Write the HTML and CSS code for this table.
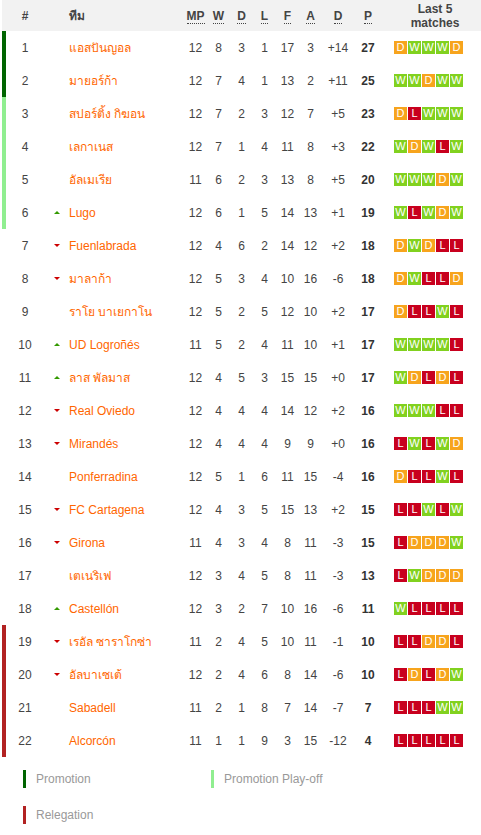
FILE: index.html
```html
<!DOCTYPE html>
<html lang="th">
<head>
<meta charset="utf-8">
<title>Standings</title>
<link rel="stylesheet" href="styles.css">
</head>
<body>
<div class="page">
  <div class="table">
    <div class="row head">
      <div class="c-rank">#</div>
      <div class="c-arrow"></div>
      <div class="c-team">ทีม</div>
      <div class="c-num"><abbr>MP</abbr></div>
      <div class="c-num"><abbr>W</abbr></div>
      <div class="c-num"><abbr>D</abbr></div>
      <div class="c-num"><abbr>L</abbr></div>
      <div class="c-num"><abbr>F</abbr></div>
      <div class="c-num"><abbr>A</abbr></div>
      <div class="c-num"><abbr>D</abbr></div>
      <div class="c-num"><abbr>P</abbr></div>
      <div class="c-form head-form">Last 5<br>matches</div>
    </div>

    <div class="row promo">
      <div class="c-rank">1</div><div class="c-arrow"></div><div class="c-team">แอสปันญอล</div>
      <div class="c-num">12</div><div class="c-num">8</div><div class="c-num">3</div><div class="c-num">1</div><div class="c-num">17</div><div class="c-num">3</div><div class="c-num">+14</div><div class="c-num pts">27</div>
      <div class="c-form"><span class="b d">D</span><span class="b w">W</span><span class="b w">W</span><span class="b w">W</span><span class="b d">D</span></div>
    </div>
    <div class="row promo">
      <div class="c-rank">2</div><div class="c-arrow"></div><div class="c-team">มายอร์ก้า</div>
      <div class="c-num">12</div><div class="c-num">7</div><div class="c-num">4</div><div class="c-num">1</div><div class="c-num">13</div><div class="c-num">2</div><div class="c-num">+11</div><div class="c-num pts">25</div>
      <div class="c-form"><span class="b w">W</span><span class="b w">W</span><span class="b d">D</span><span class="b w">W</span><span class="b w">W</span></div>
    </div>
    <div class="row playoff">
      <div class="c-rank">3</div><div class="c-arrow"></div><div class="c-team">สปอร์ติ้ง กิฆอน</div>
      <div class="c-num">12</div><div class="c-num">7</div><div class="c-num">2</div><div class="c-num">3</div><div class="c-num">12</div><div class="c-num">7</div><div class="c-num">+5</div><div class="c-num pts">23</div>
      <div class="c-form"><span class="b d">D</span><span class="b l">L</span><span class="b w">W</span><span class="b w">W</span><span class="b w">W</span></div>
    </div>
    <div class="row playoff">
      <div class="c-rank">4</div><div class="c-arrow"></div><div class="c-team">เลกาเนส</div>
      <div class="c-num">12</div><div class="c-num">7</div><div class="c-num">1</div><div class="c-num">4</div><div class="c-num">11</div><div class="c-num">8</div><div class="c-num">+3</div><div class="c-num pts">22</div>
      <div class="c-form"><span class="b w">W</span><span class="b d">D</span><span class="b w">W</span><span class="b l">L</span><span class="b w">W</span></div>
    </div>
    <div class="row playoff">
      <div class="c-rank">5</div><div class="c-arrow"></div><div class="c-team">อัลเมเรีย</div>
      <div class="c-num">11</div><div class="c-num">6</div><div class="c-num">2</div><div class="c-num">3</div><div class="c-num">13</div><div class="c-num">8</div><div class="c-num">+5</div><div class="c-num pts">20</div>
      <div class="c-form"><span class="b w">W</span><span class="b w">W</span><span class="b w">W</span><span class="b d">D</span><span class="b w">W</span></div>
    </div>
    <div class="row playoff">
      <div class="c-rank">6</div><div class="c-arrow"><span class="up"></span></div><div class="c-team">Lugo</div>
      <div class="c-num">12</div><div class="c-num">6</div><div class="c-num">1</div><div class="c-num">5</div><div class="c-num">14</div><div class="c-num">13</div><div class="c-num">+1</div><div class="c-num pts">19</div>
      <div class="c-form"><span class="b w">W</span><span class="b l">L</span><span class="b w">W</span><span class="b d">D</span><span class="b w">W</span></div>
    </div>
    <div class="row">
      <div class="c-rank">7</div><div class="c-arrow"><span class="down"></span></div><div class="c-team">Fuenlabrada</div>
      <div class="c-num">12</div><div class="c-num">4</div><div class="c-num">6</div><div class="c-num">2</div><div class="c-num">14</div><div class="c-num">12</div><div class="c-num">+2</div><div class="c-num pts">18</div>
      <div class="c-form"><span class="b d">D</span><span class="b w">W</span><span class="b d">D</span><span class="b l">L</span><span class="b l">L</span></div>
    </div>
    <div class="row">
      <div class="c-rank">8</div><div class="c-arrow"><span class="down"></span></div><div class="c-team">มาลาก้า</div>
      <div class="c-num">12</div><div class="c-num">5</div><div class="c-num">3</div><div class="c-num">4</div><div class="c-num">10</div><div class="c-num">16</div><div class="c-num">-6</div><div class="c-num pts">18</div>
      <div class="c-form"><span class="b d">D</span><span class="b w">W</span><span class="b l">L</span><span class="b l">L</span><span class="b d">D</span></div>
    </div>
    <div class="row">
      <div class="c-rank">9</div><div class="c-arrow"></div><div class="c-team">ราโย บาเยกาโน</div>
      <div class="c-num">12</div><div class="c-num">5</div><div class="c-num">2</div><div class="c-num">5</div><div class="c-num">12</div><div class="c-num">10</div><div class="c-num">+2</div><div class="c-num pts">17</div>
      <div class="c-form"><span class="b d">D</span><span class="b l">L</span><span class="b l">L</span><span class="b w">W</span><span class="b l">L</span></div>
    </div>
    <div class="row">
      <div class="c-rank">10</div><div class="c-arrow"><span class="up"></span></div><div class="c-team">UD Logroñés</div>
      <div class="c-num">11</div><div class="c-num">5</div><div class="c-num">2</div><div class="c-num">4</div><div class="c-num">11</div><div class="c-num">10</div><div class="c-num">+1</div><div class="c-num pts">17</div>
      <div class="c-form"><span class="b w">W</span><span class="b w">W</span><span class="b w">W</span><span class="b w">W</span><span class="b l">L</span></div>
    </div>
    <div class="row">
      <div class="c-rank">11</div><div class="c-arrow"><span class="up"></span></div><div class="c-team">ลาส พัลมาส</div>
      <div class="c-num">12</div><div class="c-num">4</div><div class="c-num">5</div><div class="c-num">3</div><div class="c-num">15</div><div class="c-num">15</div><div class="c-num">+0</div><div class="c-num pts">17</div>
      <div class="c-form"><span class="b w">W</span><span class="b d">D</span><span class="b l">L</span><span class="b d">D</span><span class="b l">L</span></div>
    </div>
    <div class="row">
      <div class="c-rank">12</div><div class="c-arrow"><span class="down"></span></div><div class="c-team">Real Oviedo</div>
      <div class="c-num">12</div><div class="c-num">4</div><div class="c-num">4</div><div class="c-num">4</div><div class="c-num">14</div><div class="c-num">12</div><div class="c-num">+2</div><div class="c-num pts">16</div>
      <div class="c-form"><span class="b w">W</span><span class="b w">W</span><span class="b w">W</span><span class="b l">L</span><span class="b l">L</span></div>
    </div>
    <div class="row">
      <div class="c-rank">13</div><div class="c-arrow"><span class="down"></span></div><div class="c-team">Mirandés</div>
      <div class="c-num">12</div><div class="c-num">4</div><div class="c-num">4</div><div class="c-num">4</div><div class="c-num">9</div><div class="c-num">9</div><div class="c-num">+0</div><div class="c-num pts">16</div>
      <div class="c-form"><span class="b l">L</span><span class="b w">W</span><span class="b l">L</span><span class="b w">W</span><span class="b d">D</span></div>
    </div>
    <div class="row">
      <div class="c-rank">14</div><div class="c-arrow"></div><div class="c-team">Ponferradina</div>
      <div class="c-num">12</div><div class="c-num">5</div><div class="c-num">1</div><div class="c-num">6</div><div class="c-num">11</div><div class="c-num">15</div><div class="c-num">-4</div><div class="c-num pts">16</div>
      <div class="c-form"><span class="b d">D</span><span class="b l">L</span><span class="b l">L</span><span class="b w">W</span><span class="b l">L</span></div>
    </div>
    <div class="row">
      <div class="c-rank">15</div><div class="c-arrow"><span class="down"></span></div><div class="c-team">FC Cartagena</div>
      <div class="c-num">12</div><div class="c-num">4</div><div class="c-num">3</div><div class="c-num">5</div><div class="c-num">15</div><div class="c-num">13</div><div class="c-num">+2</div><div class="c-num pts">15</div>
      <div class="c-form"><span class="b l">L</span><span class="b l">L</span><span class="b w">W</span><span class="b l">L</span><span class="b w">W</span></div>
    </div>
    <div class="row">
      <div class="c-rank">16</div><div class="c-arrow"><span class="down"></span></div><div class="c-team">Girona</div>
      <div class="c-num">11</div><div class="c-num">4</div><div class="c-num">3</div><div class="c-num">4</div><div class="c-num">8</div><div class="c-num">11</div><div class="c-num">-3</div><div class="c-num pts">15</div>
      <div class="c-form"><span class="b l">L</span><span class="b d">D</span><span class="b d">D</span><span class="b d">D</span><span class="b w">W</span></div>
    </div>
    <div class="row">
      <div class="c-rank">17</div><div class="c-arrow"></div><div class="c-team">เตเนริเฟ</div>
      <div class="c-num">12</div><div class="c-num">3</div><div class="c-num">4</div><div class="c-num">5</div><div class="c-num">8</div><div class="c-num">11</div><div class="c-num">-3</div><div class="c-num pts">13</div>
      <div class="c-form"><span class="b l">L</span><span class="b w">W</span><span class="b d">D</span><span class="b d">D</span><span class="b d">D</span></div>
    </div>
    <div class="row">
      <div class="c-rank">18</div><div class="c-arrow"><span class="up"></span></div><div class="c-team">Castellón</div>
      <div class="c-num">12</div><div class="c-num">3</div><div class="c-num">2</div><div class="c-num">7</div><div class="c-num">10</div><div class="c-num">16</div><div class="c-num">-6</div><div class="c-num pts">11</div>
      <div class="c-form"><span class="b w">W</span><span class="b l">L</span><span class="b l">L</span><span class="b l">L</span><span class="b l">L</span></div>
    </div>
    <div class="row releg">
      <div class="c-rank">19</div><div class="c-arrow"><span class="down"></span></div><div class="c-team">เรอัล ซาราโกซ่า</div>
      <div class="c-num">11</div><div class="c-num">2</div><div class="c-num">4</div><div class="c-num">5</div><div class="c-num">10</div><div class="c-num">11</div><div class="c-num">-1</div><div class="c-num pts">10</div>
      <div class="c-form"><span class="b l">L</span><span class="b l">L</span><span class="b d">D</span><span class="b d">D</span><span class="b l">L</span></div>
    </div>
    <div class="row releg">
      <div class="c-rank">20</div><div class="c-arrow"><span class="down"></span></div><div class="c-team">อัลบาเซเต้</div>
      <div class="c-num">12</div><div class="c-num">2</div><div class="c-num">4</div><div class="c-num">6</div><div class="c-num">8</div><div class="c-num">14</div><div class="c-num">-6</div><div class="c-num pts">10</div>
      <div class="c-form"><span class="b l">L</span><span class="b d">D</span><span class="b l">L</span><span class="b d">D</span><span class="b w">W</span></div>
    </div>
    <div class="row releg">
      <div class="c-rank">21</div><div class="c-arrow"></div><div class="c-team">Sabadell</div>
      <div class="c-num">11</div><div class="c-num">2</div><div class="c-num">1</div><div class="c-num">8</div><div class="c-num">7</div><div class="c-num">14</div><div class="c-num">-7</div><div class="c-num pts">7</div>
      <div class="c-form"><span class="b l">L</span><span class="b l">L</span><span class="b l">L</span><span class="b w">W</span><span class="b w">W</span></div>
    </div>
    <div class="row releg">
      <div class="c-rank">22</div><div class="c-arrow"></div><div class="c-team">Alcorcón</div>
      <div class="c-num">11</div><div class="c-num">1</div><div class="c-num">1</div><div class="c-num">9</div><div class="c-num">3</div><div class="c-num">15</div><div class="c-num">-12</div><div class="c-num pts">4</div>
      <div class="c-form"><span class="b l">L</span><span class="b l">L</span><span class="b l">L</span><span class="b l">L</span><span class="b l">L</span></div>
    </div>
  </div>

  <div class="legend">
    <div class="legend-item"><span class="lbar lb-promo"></span>Promotion</div>
    <div class="legend-item"><span class="lbar lb-playoff"></span>Promotion Play-off</div>
    <div class="legend-item"><span class="lbar lb-releg"></span>Relegation</div>
  </div>
</div>
</body>
</html>
```
FILE: styles.css
```css
html, body {
  margin: 0;
  padding: 0;
  background: #fff;
}
body {
  font-family: "Liberation Sans", Arial, "DejaVu Sans", sans-serif;
  font-size: 12px;
  color: #444;
}
.page {
  width: 481px;
}
.table {
  margin-left: 2px;
}
.row {
  display: grid;
  grid-template-columns: 38px 25px 115px 23px 23px 23px 23px 23px 23px 32px 28px 1fr;
  align-items: center;
  height: 33px;
  border-left: 4px solid transparent;
}
.row.head {
  height: 31px;
  background: #f2f2f2;
  font-weight: bold;
  color: #444;
}
.row.promo { border-left-color: #006400; }
.row.playoff { border-left-color: #90ee90; }
.row.releg { border-left-color: #b22222; }

.c-rank { text-align: center; }
.c-arrow {
  display: flex;
  justify-content: center;
  align-items: center;
}
.c-team {
  color: #ff6600;
  white-space: nowrap;
}
.head .c-team { color: #444; }
.c-num { text-align: center; }
.pts { font-weight: bold; color: #333; }
abbr {
  text-decoration: none;
  border-bottom: 1px dotted #444;
}
.c-form {
  display: flex;
  gap: 1px;
  padding-left: 12px;
}
.head-form {
  display: block;
  padding-left: 7px;
  text-align: center;
  line-height: 14px;
}
.up {
  width: 0;
  height: 0;
  border-left: 3px solid transparent;
  border-right: 3px solid transparent;
  border-bottom: 3px solid #339900;
}
.down {
  width: 0;
  height: 0;
  border-left: 3px solid transparent;
  border-right: 3px solid transparent;
  border-top: 3px solid #cc0000;
}
.b {
  width: 13px;
  height: 13px;
  line-height: 13px;
  text-align: center;
  color: #fff;
  font-size: 11px;
}
.b.w { background: #81d11f; }
.b.d { background: #f7a41d; }
.b.l { background: #c8001e; }

.legend {
  display: grid;
  grid-template-columns: 188px 188px;
  row-gap: 18px;
  padding-left: 23px;
  margin-top: 13px;
  color: #999;
}
.legend-item {
  display: flex;
  align-items: center;
  height: 18px;
}
.lbar {
  width: 3px;
  height: 18px;
  margin-right: 10px;
}
.lb-promo { background: #006400; }
.lb-playoff { background: #90ee90; }
.lb-releg { background: #b22222; }
```
